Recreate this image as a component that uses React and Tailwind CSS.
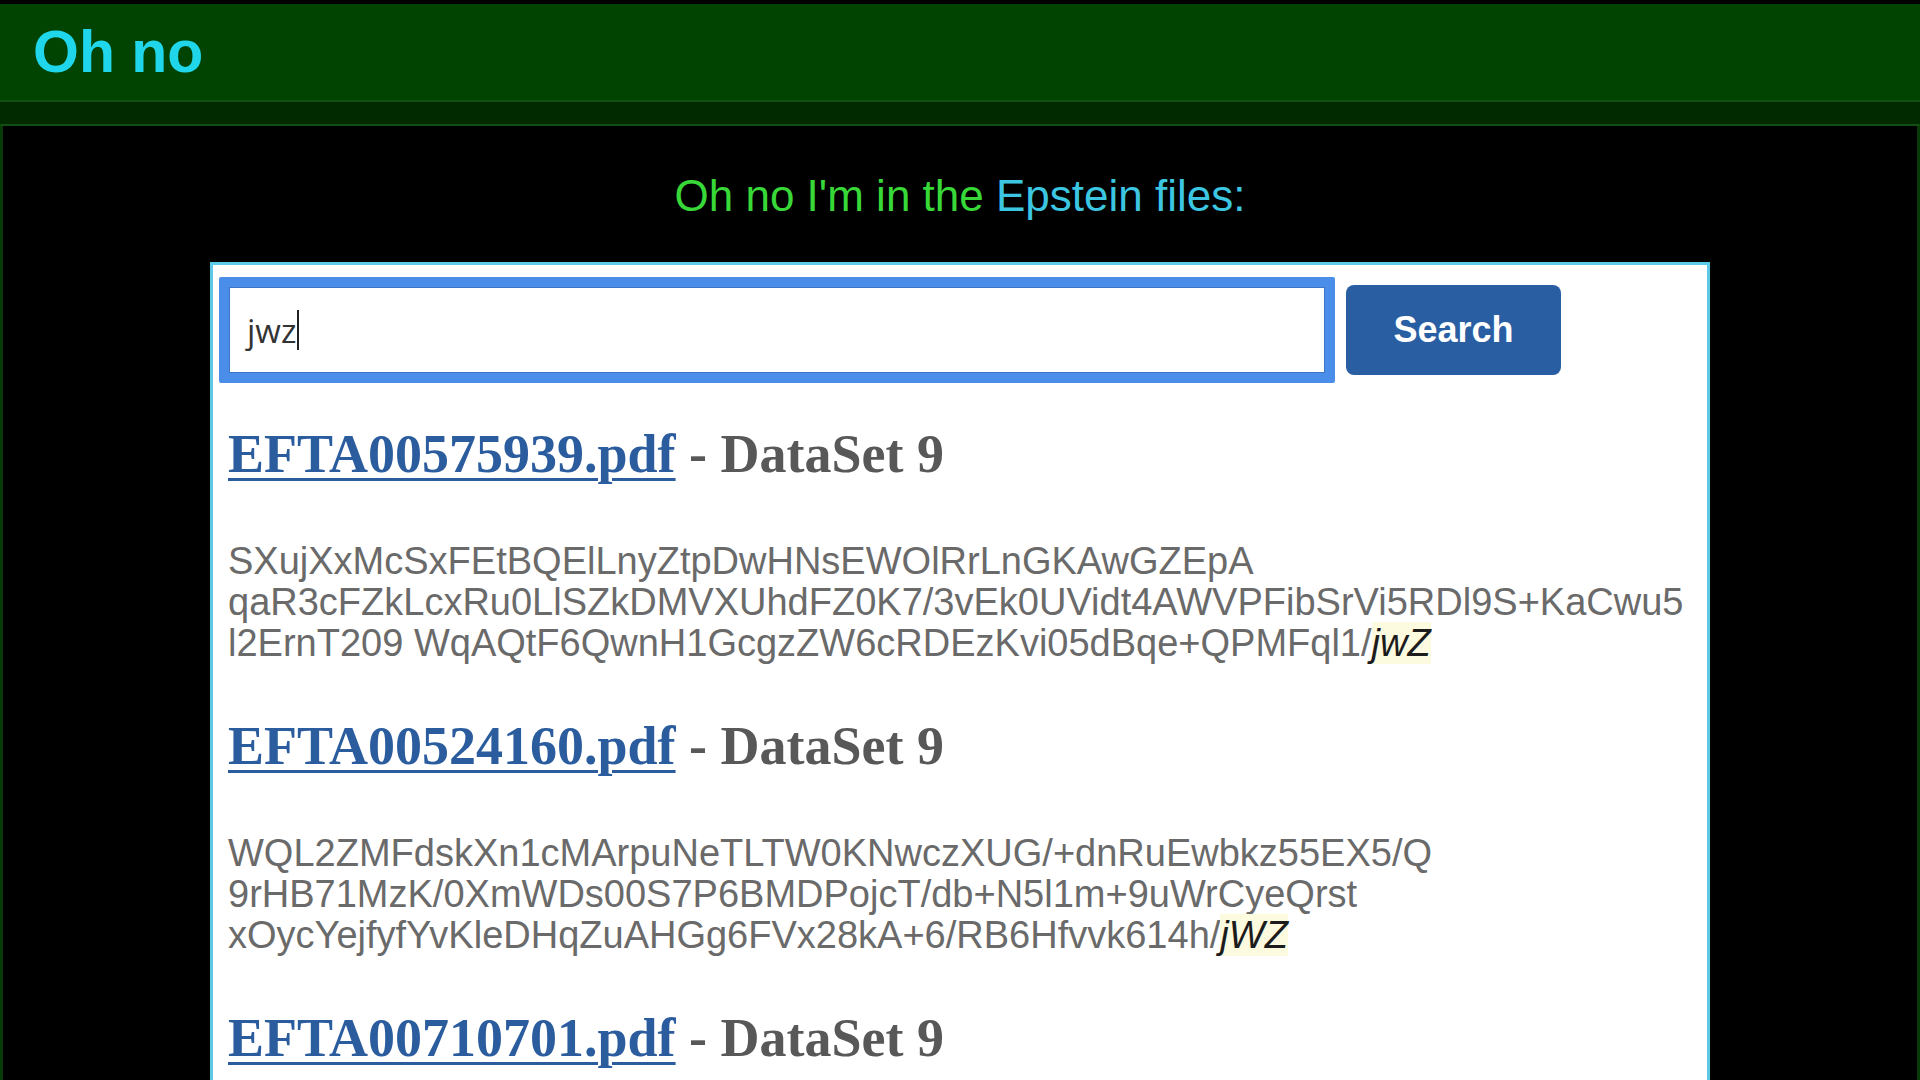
import React from "react";

const results = [
  {
    file: "EFTA00575939.pdf",
    lines: [
      "SXujXxMcSxFEtBQElLnyZtpDwHNsEWOlRrLnGKAwGZEpA",
      "qaR3cFZkLcxRu0LlSZkDMVXUhdFZ0K7/3vEk0UVidt4AWVPFibSrVi5RDl9S+KaCwu5",
      "l2ErnT209 WqAQtF6QwnH1GcgzZW6cRDEzKvi05dBqe+QPMFql1/",
    ],
    hit: "jwZ",
  },
  {
    file: "EFTA00524160.pdf",
    lines: [
      "WQL2ZMFdskXn1cMArpuNeTLTW0KNwczXUG/+dnRuEwbkz55EX5/Q",
      "9rHB71MzK/0XmWDs00S7P6BMDPojcT/db+N5l1m+9uWrCyeQrst",
      "xOycYejfyfYvKleDHqZuAHGg6FVx28kA+6/RB6Hfvvk614h/",
    ],
    hit: "jWZ",
  },
  {
    file: "EFTA00710701.pdf",
    lines: [],
    hit: "",
  },
];

function Result({ r }) {
  return (
    <div className="pb-[50px]">
      <div
        className="text-[54px] leading-[64px] font-bold whitespace-nowrap"
        style={{ fontFamily: '"Liberation Serif", serif' }}
      >
        <a
          href="#"
          className="text-[#2b5d9e] underline decoration-[3px] underline-offset-[6px]"
        >
          {r.file}
        </a>
        <span className="text-[#585858]"> - DataSet 9</span>
      </div>
      {r.lines.length > 0 && (
        <div
          className="mt-[55px] text-[38px] leading-[41px] text-[#6a6a6a]"
          style={{ fontFamily: '"Liberation Sans", Arial, sans-serif' }}
        >
          {r.lines.map((l, i) => (
            <div key={i} className="whitespace-nowrap">
              {l}
              {i === r.lines.length - 1 && (
                <mark className="bg-[#fcfbe0] text-[#1c1c1c] italic">{r.hit}</mark>
              )}
            </div>
          ))}
        </div>
      )}
    </div>
  );
}

export default function App() {
  return (
    <div
      className="h-screen w-full overflow-hidden bg-black pt-[4px] flex flex-col"
      style={{ fontFamily: '"Liberation Sans", Arial, sans-serif' }}
    >
      <header className="h-[96px] shrink-0 bg-[#014401] flex items-center pl-[33px]">
        <h1 className="text-[59px] font-bold text-[#1fd6ea] leading-none">Oh no</h1>
      </header>
      <div className="h-[26px] shrink-0 bg-[#012a01] border-y-2 border-[#124f12]" />
      <main className="flex-1 border-x-[3px] border-[#083a08] pt-[45px]">
        <p className="text-center text-[44px] leading-[50px]">
          <span className="text-[#38d838]">Oh no I'm in the </span>
          <span className="text-[#3cc6e2]">Epstein files:</span>
        </p>
        <div className="mx-auto mt-[41px] w-[1500px] bg-white border-[3px] border-b-0 border-[#5cc9e6] pt-[12px]">
          <div className="flex items-center gap-[11px] pl-[6px]">
            <div className="w-[1116px] h-[106px] bg-[#4b8ee9] p-[10px] rounded-[2px]">
              <div className="h-full bg-white border border-[#3f73c4] flex items-center pl-[17px]">
                <span
                  className="text-[33px] text-[#333] leading-none"
                  style={{ fontFamily: '"Open Sans", sans-serif' }}
                >
                  jwz
                </span>
                <span className="inline-block w-[2px] h-[40px] bg-[#222] ml-[1px]" />
              </div>
            </div>
            <button className="w-[215px] h-[90px] rounded-[8px] bg-[#2a5ea3] text-white text-[36px] font-bold">
              Search
            </button>
          </div>
          <div className="mt-[39px] px-[15px]">
            {results.map((r) => (
              <Result key={r.file} r={r} />
            ))}
          </div>
        </div>
      </main>
    </div>
  );
}
